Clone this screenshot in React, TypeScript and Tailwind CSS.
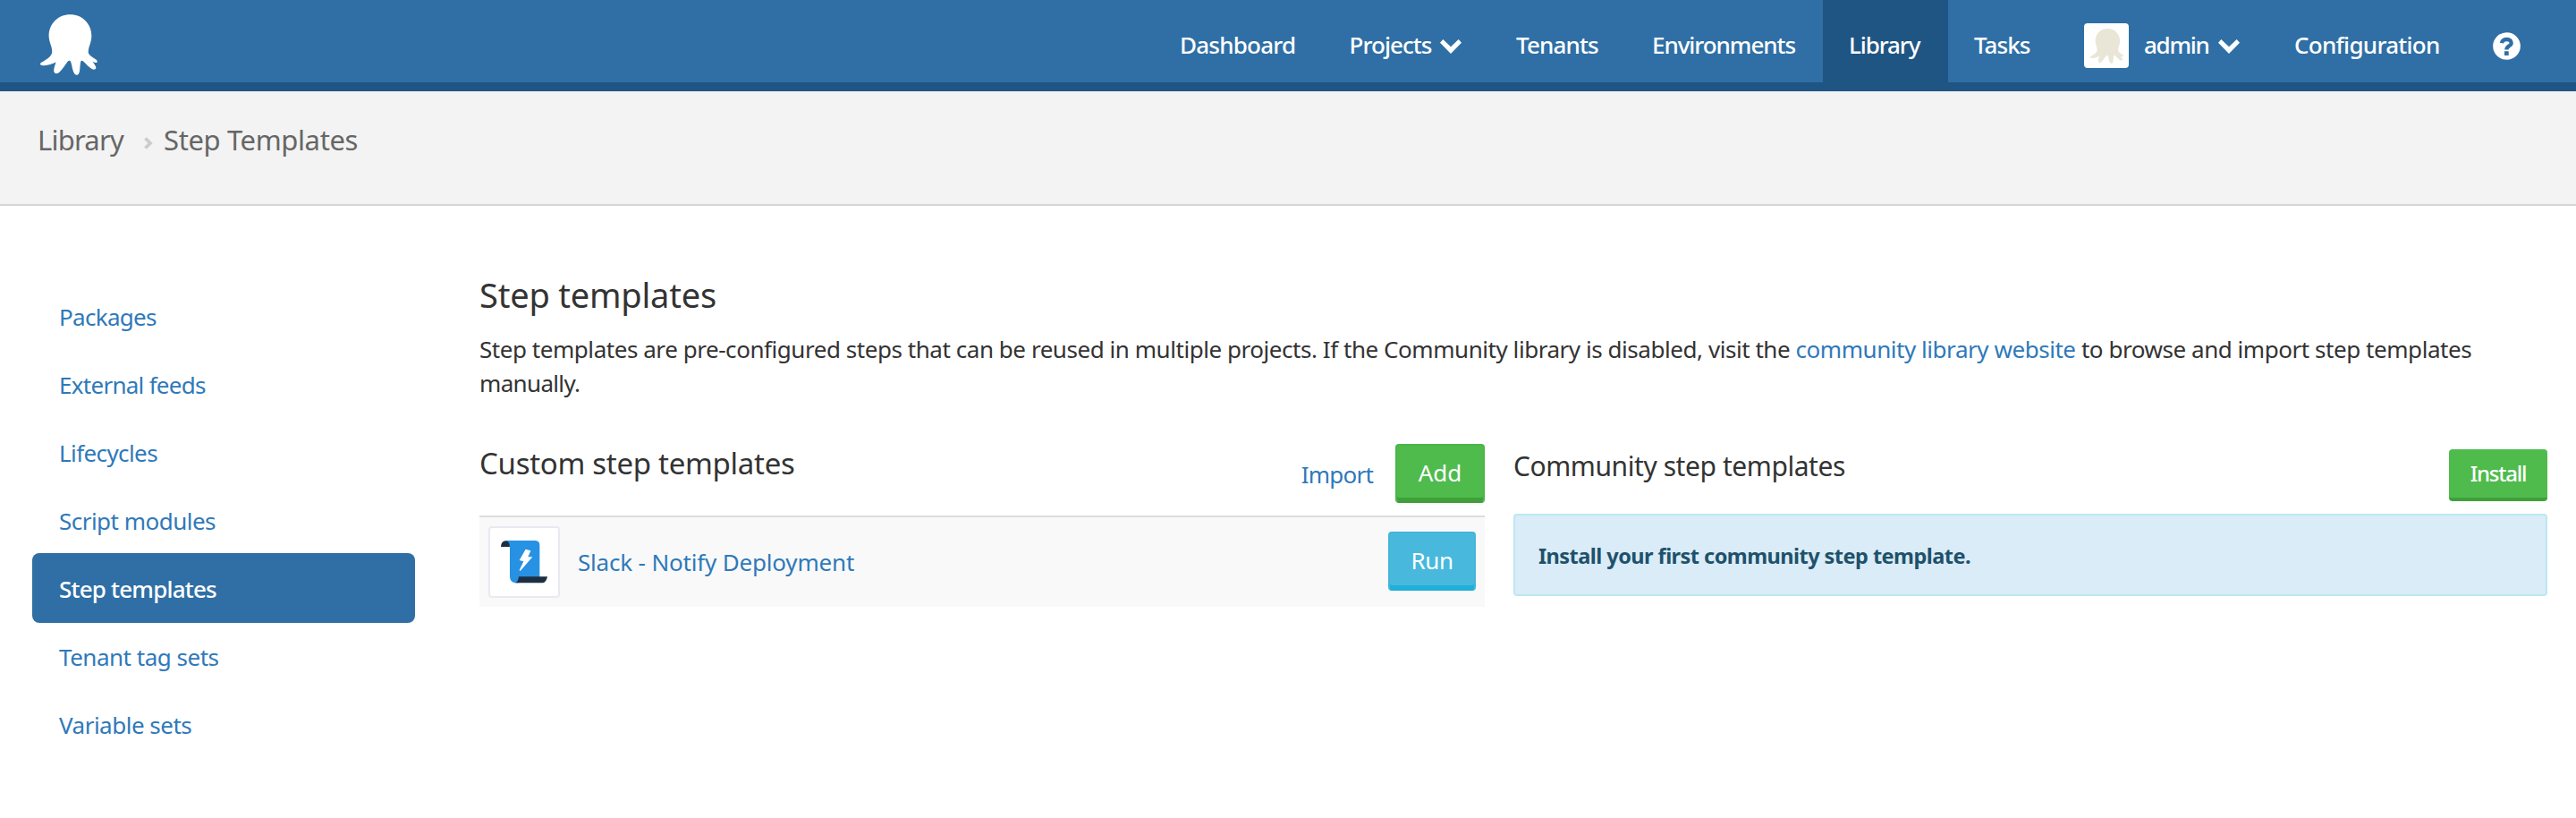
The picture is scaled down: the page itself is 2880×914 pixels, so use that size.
import type { ReactNode } from "react";

const OCTOPUS =
  "M128 30C170 30 200 62 200 102C200 125 189 138 189 158C190 168 206 176 217 183C221 188 219 193 214 192C209 192 206 190 203 188C207 195 214 203 215 209C216 215 208 217 202 214C190 208 182 197 172 188C168 184 164 186 163 191C160 205 162 218 158 227C155 236 145 236 141 228C135 217 134 200 130 190C128 184 123 184 119 189C110 200 102 214 93 223C85 231 75 231 73 222C72 212 77 200 80 191C69 197 50 203 37 202C26 202 24 196 32 191C44 184 66 172 67 156C67 136 56 124 56 102C56 62 86 30 128 30Z";

function Octopus({ className }: { className: string }) {
  return (
    <svg viewBox="27 30 193 204" className={className} fill="currentColor" aria-hidden="true">
      <path d={OCTOPUS} />
    </svg>
  );
}

function ChevronDown() {
  return (
    <svg viewBox="0 0 72 48" className="h-4 w-6 shrink-0" fill="currentColor" aria-hidden="true">
      <path d="M10 0L36 25L62 0L72 11L36 48L0 11Z" />
    </svg>
  );
}

function HelpIcon() {
  return (
    <svg viewBox="53 48 91 92" className="h-[31px] w-[31px]" aria-hidden="true">
      <circle cx="98.500" cy="94" r="45.500" fill="#fff" />
      <path d="M82 84C85 67 114 68 114 84C114 94 98 93 98 106" fill="none" stroke="#2f6fa5" strokeWidth="13" />
      <rect x="91" y="111" width="14" height="14" fill="#2f6fa5" />
    </svg>
  );
}

function ScriptIcon() {
  return (
    <svg viewBox="24 30 228 228" className="h-[76px] w-[76px]" aria-hidden="true">
      <path d="M76 72H176Q190 73 190 88V196L120 214H108Q90 211 90 192V90Z" fill="#2791e4" />
      <path d="M60 93Q61 73 76 73Q89 73 90 93Z" fill="#1c2f42" />
      <path d="M120 193H216Q212 213 200 214H108Q118 211 120 193Z" fill="#1c2f42" />
      <path d="M143 101L160 106L151 127H166L125 174L122 171L136 142L122 138Z" fill="#fff" />
    </svg>
  );
}

function NavItem({ width, active, children }: { width: string; active?: boolean; children: ReactNode }) {
  return (
    <a className={`flex h-[92px] items-center pt-2 pl-[30px] ${width} ${active ? "bg-[#1f5583]" : ""}`}>{children}</a>
  );
}

const sideLinks = [
  { label: "Packages", tracking: "tracking-[-0.7px]" },
  { label: "External feeds", tracking: "tracking-[-0.72px]" },
  { label: "Lifecycles", tracking: "tracking-[-0.6px]" },
  { label: "Script modules", tracking: "tracking-[-0.52px]" },
  { label: "Step templates", tracking: "tracking-[-0.8px]", active: true },
  { label: "Tenant tag sets", tracking: "tracking-[-0.49px]" },
  { label: "Variable sets", tracking: "tracking-[-0.5px]" },
];

export default function App() {
  return (
    <div className="h-[914px] w-[2880px] overflow-hidden bg-white font-['Noto_Sans',sans-serif] text-[26px] leading-[38px] text-[#333]">
      <header className="flex h-[102px] justify-between border-b-[10px] border-[#1f5583] bg-[#2f6fa5] pl-[45px] font-medium text-white">
        <Octopus className="mt-4 h-[68px] w-[64px]" />
        <nav className="flex">
          <NavItem width="w-[189.6px]"><span className="tracking-[-0.77px]">Dashboard</span></NavItem>
          <NavItem width="w-[186.4px]">
            <span className="mr-[10px] tracking-[-0.98px]">Projects</span>
            <span className="pt-1"><ChevronDown /></span>
          </NavItem>
          <NavItem width="w-[152px]"><span className="tracking-[-0.86px]">Tenants</span></NavItem>
          <NavItem width="w-[221px]"><span className="tracking-[-1.05px]">Environments</span></NavItem>
          <NavItem width="w-[140px]" active><span className="-ml-px tracking-[-1.1px]">Library</span></NavItem>
          <NavItem width="w-[122px]"><span className="-ml-px tracking-[-0.95px]">Tasks</span></NavItem>
          <NavItem width="w-[235px]">
            <span className="mt-0.5 mr-[17px] flex h-[50px] w-[50px] items-center justify-center rounded-[4px] bg-white text-[#e9e6d7]">
              <Octopus className="h-[39px] w-[37px]" />
            </span>
            <span className="mr-[10px] tracking-[-1.28px]">admin</span>
            <span className="pt-1"><ChevronDown /></span>
          </NavItem>
          <NavItem width="w-[222px]"><span className="tracking-[-0.72px]">Configuration</span></NavItem>
          <NavItem width="w-[123px]"><span className="pt-[2px]"><HelpIcon /></span></NavItem>
        </nav>
      </header>

      <div className="flex h-[128px] items-start border-b-2 border-[#d5d5d5] bg-[#f3f3f3] pt-[34px] pl-[42px] text-[31px] leading-[40px] text-[#666]">
        <span className="w-[119px] tracking-[-0.78px]">Library</span>
        <svg viewBox="0 0 10 14" className="mt-[17px] mr-[12px] h-[14px] w-[10px]" aria-hidden="true">
          <path d="M1.500 1.500L7 7L1.500 12.500" fill="none" stroke="#ccc" strokeWidth="3.800" />
        </svg>
        <span className="tracking-[-0.38px]">Step Templates</span>
      </div>

      <div className="flex">
        <aside className="mt-[84px] ml-9 flex w-[428px] flex-col">
          {sideLinks.map((l) => (
            <a
              key={l.label}
              className={`-mb-0.5 flex h-[78px] items-center rounded-[8px] pt-0.5 pl-[30px] ${l.tracking} ${
                l.active ? "bg-[#2f6fa5] font-medium text-white" : "text-[#2f79b9]"
              }`}
            >
              {l.label}
            </a>
          ))}
        </aside>

        <main className="mt-[75px] ml-[72px] w-[2312px]">
          <h1 className="text-[38px] leading-[48px] tracking-[-0.2px]">Step templates</h1>
          <p className="mt-[18px] tracking-[-0.45px]">
            Step templates are pre-configured steps that can be reused in multiple projects. If the Community library is
            disabled, visit the <a className="text-[#2f79b9]">community library website</a> to browse and import step
            templates
            <br />
            <span className="tracking-[-0.66px]">manually.</span>
          </p>

          <div className="mt-[49px] flex gap-8">
            <section className="w-[1124px]">
              <div className="flex h-[82px] items-start border-b-2 border-[#dcdcdc]">
                <h2 className="mt-0.5 flex-1 text-[33px] leading-[40px] tracking-[-0.29px]">Custom step templates</h2>
                <a className="mt-[15px] mr-[25px] tracking-[-0.8px] text-[#2f79b9]">Import</a>
                <button className="flex h-[66px] w-[100px] justify-center rounded-[4px] border-2 border-[#4ab648] border-b-[#3fa03a] bg-[#4fbb4d] pt-[11px] text-white shadow-[inset_0_-4px_0_#3fa03a]">
                  Add
                </button>
              </div>
              <div className="flex h-[100px] items-center bg-[#f9f9f9] pl-[10px]">
                <div className="h-20 w-20 rounded-[4px] border-2 border-[#e7eaf0] bg-white">
                  <ScriptIcon />
                </div>
                <a className="ml-5 flex-1 tracking-[-0.18px] text-[#2f79b9]">Slack - Notify Deployment</a>
                <button className="mr-[10px] mb-0.5 flex h-[66px] w-[98px] justify-center rounded-[4px] border-2 border-[#45b5d9] border-b-[#20aedb] bg-[#48b9dc] pt-[11px] tracking-[-0.4px] text-white shadow-[inset_0_-4px_0_#20aedb]">
                  Run
                </button>
              </div>
            </section>

            <section className="w-[1156px]">
              <div className="flex h-[78px] items-start justify-between">
                <h2 className="mt-[5px] text-[30px] leading-[40px] tracking-[-0.43px]">Community step templates</h2>
                <button className="mt-1.5 flex h-[58px] w-[110px] justify-center rounded-[4px] border-b-4 border-[#3fa03a] bg-[#4fbb4d] pt-[8px] text-[24px] font-medium tracking-[-1.2px] text-white">
                  Install
                </button>
              </div>
              <div className="flex h-[92px] items-center rounded-[4px] border-2 border-[#bce8f1] bg-[#d9ecf7] pt-0.5 pl-[26px] text-[23.5px] font-bold tracking-[-0.54px] text-[#1f516b]">
                Install your first community step template.
              </div>
            </section>
          </div>
        </main>
      </div>
    </div>
  );
}
